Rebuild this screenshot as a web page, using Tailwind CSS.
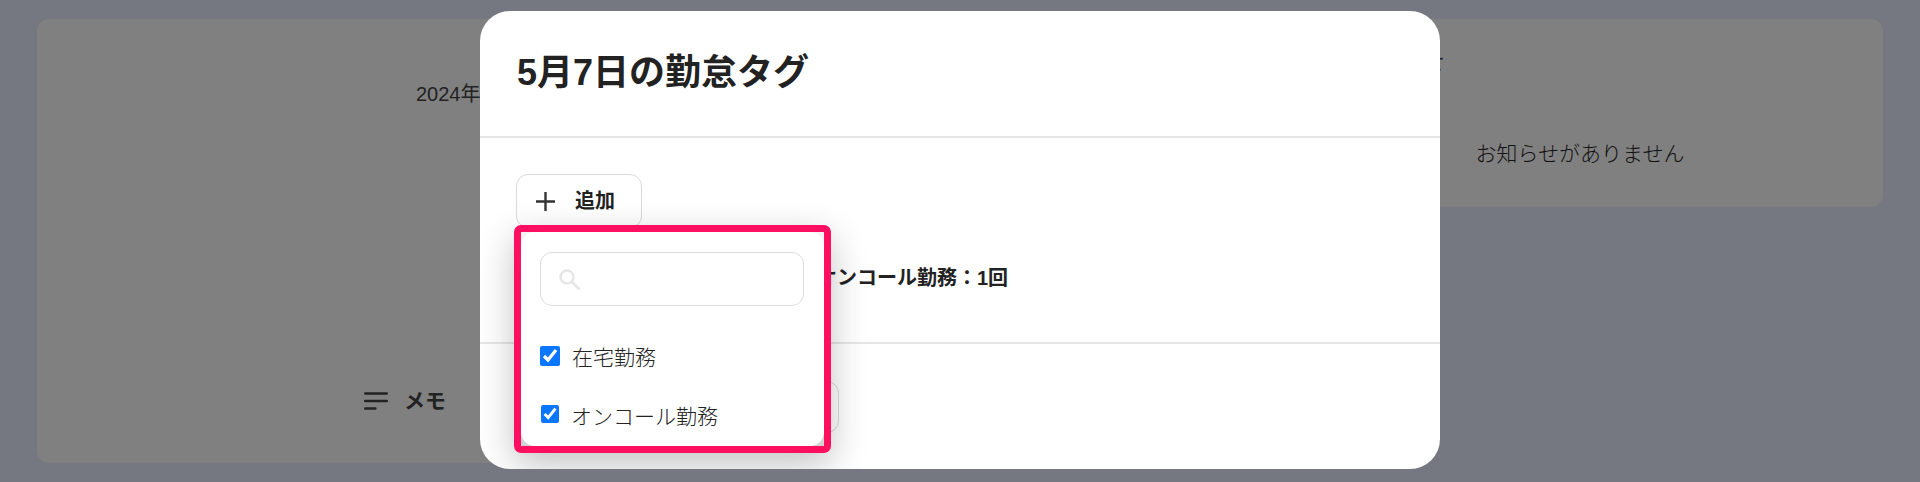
<!DOCTYPE html>
<html lang="ja">
<head>
  <meta charset="UTF-8" />
  <title>勤怠タグ</title>
  <script src="https://cdn.jsdelivr.net/npm/@tailwindcss/browser@4"></script>
</head>
<body class="relative w-[1920px] h-[482px] overflow-hidden bg-[#757880] text-[#222] font-['Liberation_Sans','Noto_Sans_CJK_JP',sans-serif]">

  <!-- page behind the overlay -->
  <div class="flex gap-5 pl-[37px] pt-[19px]">
    <div class="w-[1220px] h-[444px] rounded-xl bg-[#808080] flex flex-col justify-between pb-[50px]">
      <p class="pl-[379px] pt-[63px] text-[20px] leading-6">2024年5月</p>
      <div class="flex items-center gap-[16px] pl-[327px]">
        <svg class="w-6 h-[18px]" viewBox="0 0 24 18" fill="none" stroke="#222" stroke-width="2.6" stroke-linecap="round"><path d="M1.3 1.500h21.400M1.300 9h21.400M1.300 16.500h10"/></svg>
        <span class="text-[21px] font-bold leading-6">メモ</span>
      </div>
    </div>
    <div class="w-[606px] h-[188px] rounded-xl bg-[#808080]">
      <h2 class="pl-[80px] pt-[32px] text-[22px] leading-6 text-[#1a2230]">お知らせ</h2>
      <p class="pt-[67px] text-center text-[21px] leading-6 font-light text-[#111]">お知らせがありません</p>
    </div>
  </div>

  <!-- modal -->
  <div class="absolute left-[480px] top-[11px] w-[960px] h-[458px] rounded-[30px] bg-white overflow-hidden">
    <div class="h-[127px] border-b-2 border-[#e6e6e6] pl-[37px] pt-[37px]">
      <h1 class="text-[36px] font-bold leading-[50px]">5月7日の勤怠タグ</h1>
    </div>
    <div class="h-[206px] border-b-2 border-[#e6e6e6] pl-[36px] pt-[36px]">
      <button class="w-[126px] h-[54px] rounded-xl border border-[#d9d9d9] bg-white flex items-center pl-[19px] gap-5">
        <svg class="w-[19px] h-[19px]" viewBox="0 0 19 19" fill="none" stroke="#333" stroke-width="2.400"><path d="M9.500 0v19M0 9.500h19"/></svg>
        <span class="text-[20px] font-bold leading-6">追加</span>
      </button>
      <div class="flex mt-[38px] pl-[301px] text-[20px] font-bold leading-6">
        <span>オンコール勤務：1回</span>
      </div>
    </div>
    <div class="pl-[37px] pt-[37px]">
      <input class="w-[322px] h-[52px] rounded-xl border border-[#d9d9d9]" />
    </div>

    <!-- dropdown, with the pink annotation frame -->
    <div class="absolute left-[34px] top-[214px] w-[317px] h-[228px] rounded-[7px] border-[7px] border-[#ff0f5f] bg-linear-to-b from-[#f4f4f4] to-[#d2d2d2] shadow-[0_12px_36px_rgba(0,0,0,0.24)]">
      <div class="h-full rounded-[14px] bg-white pl-[19px] pt-[20px]">
        <div class="w-[264px] h-[54px] rounded-xl border border-[#dcdcdc] flex items-center pl-[18px]">
          <svg class="w-[21px] h-[21px]" viewBox="0 0 21 21" fill="none" stroke="#e6e6e6" stroke-width="2.500" stroke-linecap="round"><circle cx="8" cy="8" r="6.500"/><path d="M13 13l7 7"/></svg>
        </div>
        <label class="flex items-center gap-3 mt-[39px] h-6 text-[21px] font-light text-[#222]">
          <input type="checkbox" checked class="w-5 h-5 accent-[#0b76ff] -translate-y-px" />
          <span class="translate-y-px">在宅勤務</span>
        </label>
        <label class="flex items-center gap-3 mt-[34px] h-6 pl-px text-[21px] font-light text-[#222]">
          <input type="checkbox" checked class="w-[18px] h-[18px] accent-[#0b76ff] -translate-y-px" />
          <span class="translate-y-[2px]">オンコール勤務</span>
        </label>
      </div>
    </div>
  </div>
</body>
</html>
